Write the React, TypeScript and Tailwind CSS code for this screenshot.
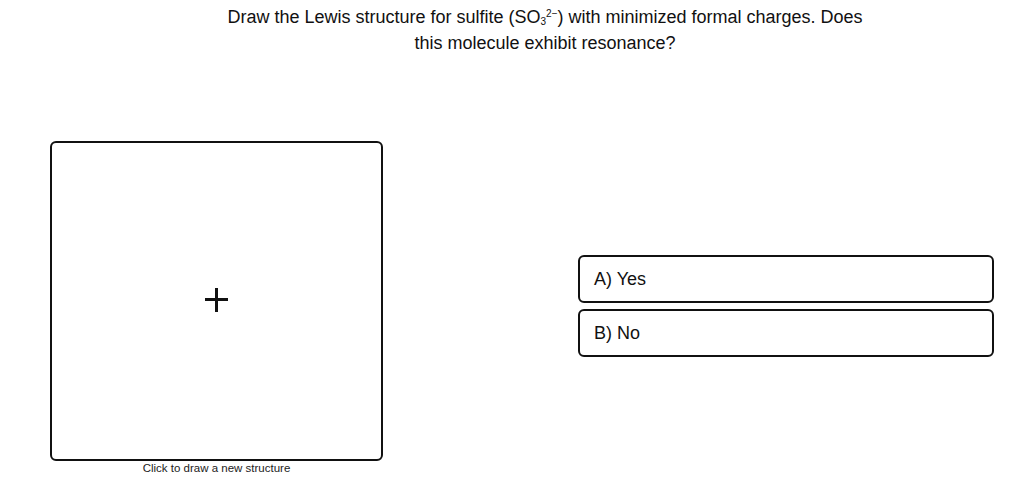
export default function App() {
  return (
    <div className="h-[488px] w-[1024px] bg-white text-[#111] font-['Liberation_Sans',Arial,sans-serif]">
      <div className="flex justify-center pl-[66px] pt-[4px]">
        <p className="w-[660px] text-center text-[18px] leading-[26px]">
          Draw the Lewis structure for sulfite (SO
          <span className="align-[-2px] text-[10px] leading-none">3</span>
          <span className="align-[6px] text-[10px] leading-none">2−</span>) with minimized formal charges. Does this molecule exhibit resonance?
        </p>
      </div>
      <div className="mt-[85px] flex">
        <div className="ml-[50px] flex w-[333px] flex-col items-center">
          <button className="flex h-[320px] w-[333px] items-center justify-center rounded-md border-2 border-[#111] bg-white">
            <svg width="24" height="26" viewBox="0 0 24 26" className="mt-[-2px]">
              <rect x="0" y="11" width="23" height="3" fill="#111" />
              <rect x="10" y="1" width="3" height="24" fill="#111" />
            </svg>
          </button>
          <span className="text-[11.5px] leading-[14px] text-[#222]">Click to draw a new structure</span>
        </div>
        <div className="ml-[195px] mt-[114px] flex w-[416px] flex-col gap-[6px]">
          <div className="flex h-[48px] items-center rounded-md border-2 border-[#111] px-[14px] text-[18px]">A) Yes</div>
          <div className="flex h-[48px] items-center rounded-md border-2 border-[#111] px-[14px] text-[18px]">B) No</div>
        </div>
      </div>
    </div>
  );
}
